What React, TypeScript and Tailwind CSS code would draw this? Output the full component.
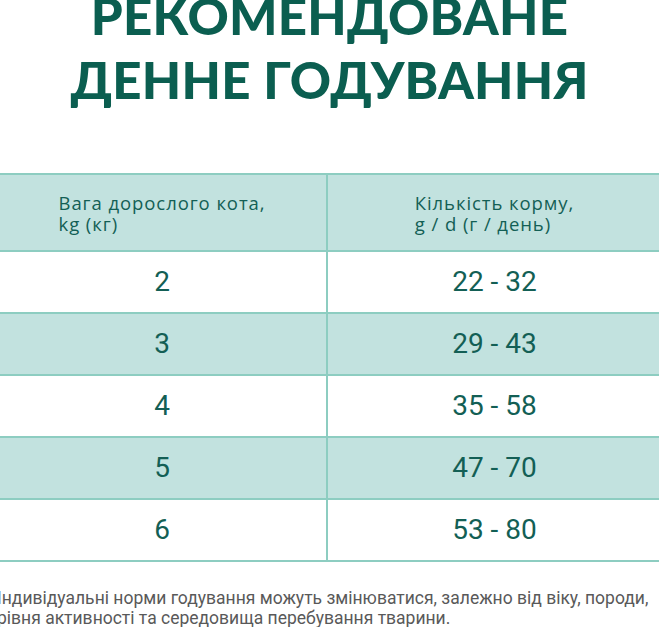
const rows = [
  { weight: '2', amount: '22 - 32' },
  { weight: '3', amount: '29 - 43' },
  { weight: '4', amount: '35 - 58' },
  { weight: '5', amount: '47 - 70' },
  { weight: '6', amount: '53 - 80' },
];

export default function App() {
  return (
    <div className="h-[627px] w-[659px] overflow-hidden bg-white">
      <h1 className="-mt-[16px] text-center font-['Lato',sans-serif] text-[51px] font-black uppercase leading-[64px] tracking-[0.005em] text-[#0b5e50]">
        Рекомендоване
        <br />
        денне годування
      </h1>

      <div className="mt-[61px] -ml-[2px] w-[663px] border-t-2 border-b-2 border-[#8dcdc1] text-[#135f55]">
        <div className="grid grid-cols-[330px_333px] bg-[#c2e2df] font-['Open_Sans',sans-serif]">
          <div className="flex h-[75px] items-center justify-center border-r-2 border-[#8dcdc1]">
            <p className="text-left text-[18.5px] leading-[21px] tracking-[0.05em]">
              Вага дорослого кота,
              <br />
              kg (кг)
            </p>
          </div>
          <div className="flex h-[75px] items-center justify-center">
            <p className="text-left text-[18.5px] leading-[21px] tracking-[0.05em]">
              Кількість корму,
              <br />
              g / d (г / день)
            </p>
          </div>
        </div>
        {rows.map((row, i) => (
          <div
            key={row.weight}
            className={
              'grid grid-cols-[330px_333px] border-t-2 border-[#8dcdc1] font-[\'Roboto\',sans-serif] ' +
              (i % 2 === 1 ? 'bg-[#c2e2df]' : 'bg-white')
            }
          >
            <div className="flex h-[60px] items-center justify-center border-r-2 border-[#8dcdc1] text-[28px]">
              {row.weight}
            </div>
            <div className="flex h-[60px] items-center justify-center text-[28px]">{row.amount}</div>
          </div>
        ))}
      </div>

      <p className="mt-[26px] -ml-[3px] whitespace-nowrap font-['Roboto',sans-serif] text-[17.5px] leading-[20px] text-[#595959]">
        Індивідуальні норми годування можуть змінюватися, залежно від віку, породи,
        <br />
        рівня активності та середовища перебування тварини.
      </p>
    </div>
  );
}
